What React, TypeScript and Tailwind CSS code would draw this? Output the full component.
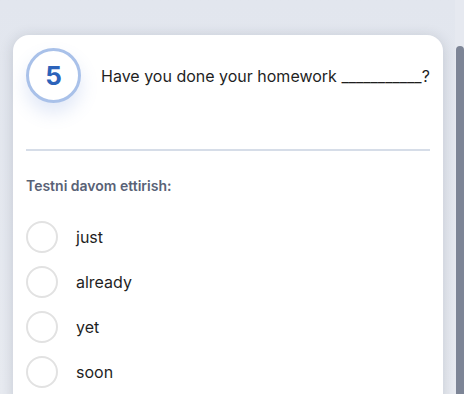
export default function App() {
  const options = ["just", "already", "yet", "soon"];

  return (
    <div className="relative h-[394px] w-[464px] overflow-hidden bg-gradient-to-b from-[#e2e6ee] to-[#e8ebf1] font-['Inter',sans-serif]">
      <div className="pl-[13px] pt-[35px]">
        <div className="w-[430px] rounded-2xl bg-white px-[13px] pt-[13px] pb-6 shadow-[0_2px_14px_rgba(40,50,70,0.18)]">
          <div className="flex items-center gap-5">
            <div className="flex h-[55px] w-[55px] shrink-0 items-center justify-center rounded-full border-[3px] border-[#a9c1e9] bg-white shadow-[0_10px_18px_rgba(90,130,210,0.18)]">
              <span className="text-[26px] font-bold leading-none text-[#2c63ba]">5</span>
            </div>
            <p className="text-[16px] text-[#1f1f1f]">
              Have you done your homework ___________?
            </p>
          </div>

          <div className="mt-[46px] h-[2px] bg-[#d6dde8]" />

          <p className="mt-[25px] text-[14px] font-semibold leading-5 text-[#596276]">
            Testni davom ettirish:
          </p>

          <div className="mt-[25px] flex flex-col gap-[13px]">
            {options.map((opt) => (
              <label key={opt} className="flex items-center gap-[18px]">
                <span className="h-8 w-8 shrink-0 rounded-full border-2 border-[#e2e2e2]" />
                <span className="text-[16px] text-[#1f1f1f]">{opt}</span>
              </label>
            ))}
          </div>
        </div>
      </div>

      <div className="absolute top-0 right-0 h-full w-[9px] bg-[#e6e9f0]">
        <div className="absolute top-[46px] right-0 bottom-0 w-[8px] rounded-t-full bg-[#7d8596]" />
      </div>
    </div>
  );
}
